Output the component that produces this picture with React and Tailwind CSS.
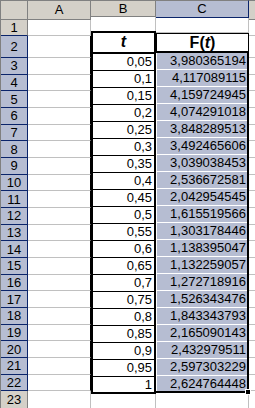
import React from 'react'

// rows 3..22 of the sheet: t in column B, F(t) in column C
const DATA = [
  ['0,05', '3,980365194'],
  ['0,1', '4,117089115'],
  ['0,15', '4,159724945'],
  ['0,2', '4,074291018'],
  ['0,25', '3,848289513'],
  ['0,3', '3,492465606'],
  ['0,35', '3,039038453'],
  ['0,4', '2,536672581'],
  ['0,45', '2,042954545'],
  ['0,5', '1,615519566'],
  ['0,55', '1,303178446'],
  ['0,6', '1,138395047'],
  ['0,65', '1,132259057'],
  ['0,7', '1,272718916'],
  ['0,75', '1,526343476'],
  ['0,8', '1,843343793'],
  ['0,85', '2,165090143'],
  ['0,9', '2,432979511'],
  ['0,95', '2,597303229'],
  ['1', '2,624764448'],
]

const BODY = DATA.map((_, i) => i + 3)

function RowHeaders() {
  return (
    <div className="flex w-[28px] shrink-0 flex-col border-l border-[#808080]">
      <div className="h-[20px] border-y border-r border-[#808080] bg-[#d4d0c8]" />
      <div className="flex h-[17px] items-center justify-center border-b border-r border-b-[#0a246a] border-r-[#808080] bg-[#d4d0c8]">1</div>
      <div className="flex h-[22px] items-center justify-center border-b border-r border-[#0a246a] bg-[#b6bdd2]">2</div>
      {BODY.map((n) => (
        <div key={n} className="flex h-[17px] items-center justify-center border-b border-r border-[#0a246a] bg-[#b6bdd2]">
          {n}
        </div>
      ))}
      <div className="flex h-[17px] items-center justify-center border-r border-[#808080] bg-[#d4d0c8]">23</div>
    </div>
  )
}

function ColA() {
  return (
    <div className="flex w-[63px] shrink-0 flex-col">
      <div className="flex h-[20px] items-center justify-center border-y border-r border-[#808080] bg-[#d4d0c8]">A</div>
      <div className="h-[17px] border-b border-r border-[#c0c0c0]" />
      <div className="h-[22px] border-b border-r border-b-[#c0c0c0] border-r-black" />
      {BODY.map((n) => (
        <div key={n} className="h-[17px] border-b border-r border-b-[#c0c0c0] border-r-black" />
      ))}
      <div className="h-[17px] border-r border-[#c0c0c0]" />
    </div>
  )
}

function ColB() {
  return (
    <div className="flex w-[65px] shrink-0 flex-col">
      <div className="flex h-[20px] items-center justify-center border-y border-r border-[#808080] bg-[#d4d0c8]">B</div>
      <div className="h-[16px] border-r border-[#c0c0c0]" />
      {/* bordered block B2:B22 */}
      <div className="flex flex-col border-2 border-black">
        <div className="flex h-[21px] items-center justify-center border-b-2 border-black text-[16px] font-bold italic">t</div>
        {DATA.map(([t], i) => (
          <div
            key={i}
            className={`flex items-center justify-end pr-[2px] ${i === DATA.length - 1 ? 'h-[15px]' : 'h-[17px] border-b border-black'}`}
          >
            {t}
          </div>
        ))}
      </div>
      <div className="h-[17px] border-r border-[#c0c0c0]" />
    </div>
  )
}

function ColC() {
  return (
    <div className="relative z-10 flex w-[93px] shrink-0 flex-col">
      <div className="flex h-[20px] items-center justify-center border-y border-r border-t-[#808080] border-b-[#0a246a] border-r-[#0a246a] bg-[#b6bdd2]">C</div>
      <div className="h-[17px] border-b border-r border-[#c0c0c0]" />
      <div className="flex h-[22px] items-center justify-center border-x border-t border-b-2 border-black text-[16px] font-bold">
        F(<span className="italic">t</span>)
      </div>
      {/* selection C3:C22 */}
      <div className="relative flex flex-col border-b-2 border-r-2 border-black">
        {DATA.map(([, f], i) => (
          <div
            key={i}
            className={`flex items-center justify-end border-l border-white bg-[#b6bdd2] pr-[1px] ${i === DATA.length - 1 ? 'h-[15px]' : 'h-[17px] border-b'}`}
          >
            {f}
          </div>
        ))}
        <div className="absolute -bottom-[4px] -right-[4px] h-[6px] w-[6px] border border-white bg-black" />
      </div>
      <div className="h-[17px] border-r border-[#c0c0c0]" />
    </div>
  )
}

function ColD() {
  return (
    <div className="flex min-w-0 flex-1 flex-col">
      <div className="h-[20px] border-y border-[#808080] bg-[#d4d0c8]" />
      <div className="h-[17px] border-b border-[#c0c0c0]" />
      <div className="h-[22px] border-b border-[#c0c0c0]" />
      {BODY.map((n) => (
        <div key={n} className="h-[17px] border-b border-[#c0c0c0]" />
      ))}
      <div className="h-[17px]" />
    </div>
  )
}

export default function App() {
  return (
    <div className="flex h-[408px] w-[255px] overflow-hidden bg-white font-['Liberation_Sans',Arial,sans-serif] text-[13px] leading-none text-black">
      <RowHeaders />
      <ColA />
      <ColB />
      <ColC />
      <ColD />
    </div>
  )
}
